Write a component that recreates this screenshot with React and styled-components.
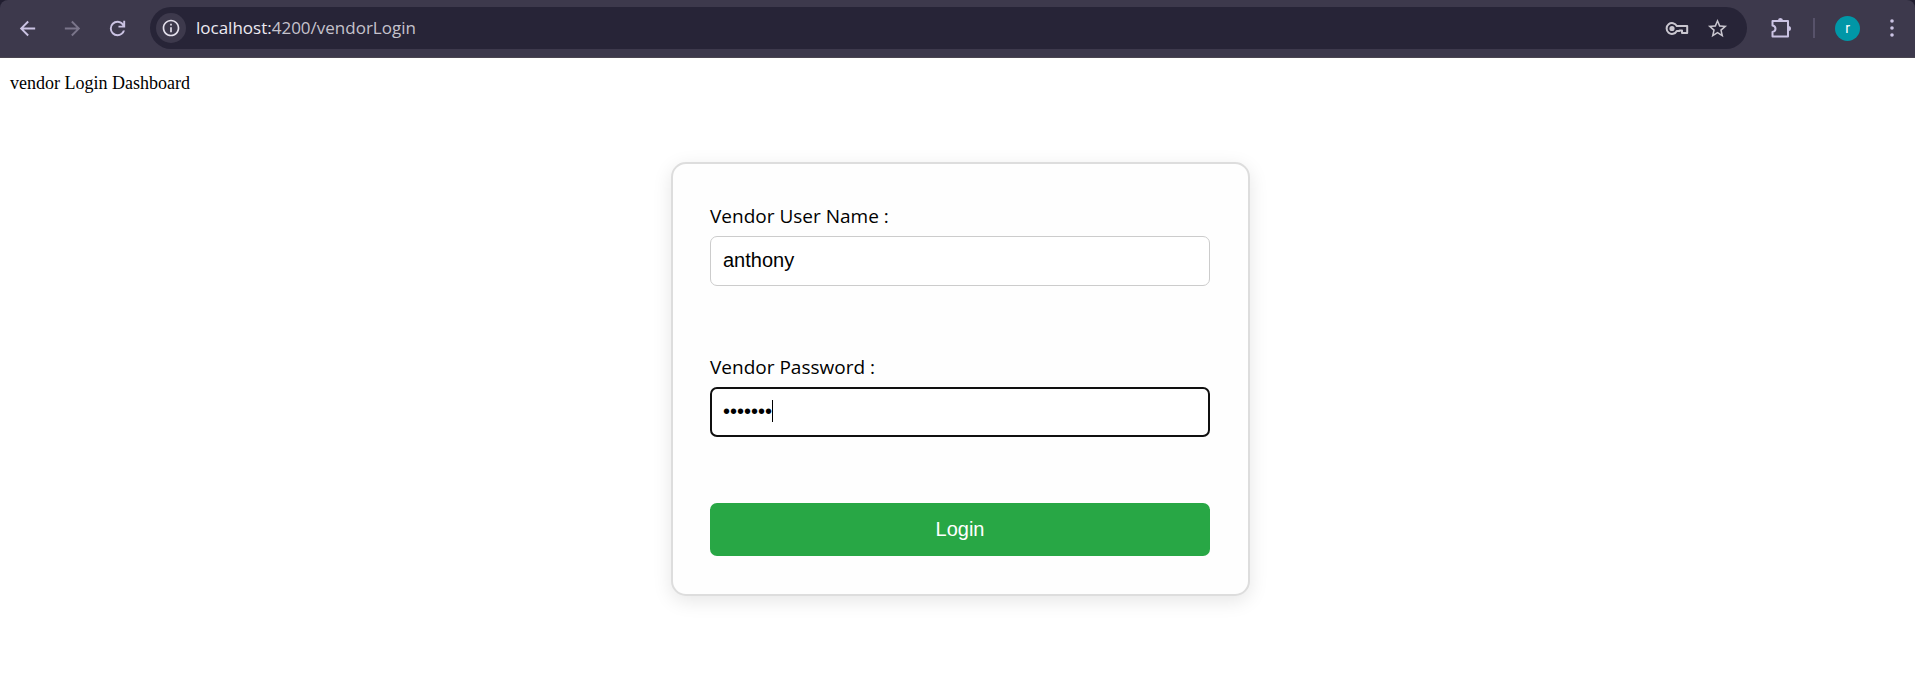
import React, { useState } from "react";
import styled, { createGlobalStyle } from "styled-components";

const GlobalStyle = createGlobalStyle`
  *, *::before, *::after { box-sizing: border-box; }
  html, body { margin: 0; background: #fff; }
`;

const uiFont = `"Segoe UI", "Open Sans", "Noto Sans", sans-serif`;

const BrowserFrame = styled.header`
  background: #211e30;
`;

const Toolbar = styled.div`
  display: flex;
  align-items: center;
  height: 58px;
  padding: 0 9px 1px 13px;
  background: #3d394c;
  border-bottom: 1px solid #4a4550;
  border-radius: 8px 8px 0 0;
`;

const Navigation = styled.nav`
  display: flex;
  gap: 17px;
  margin-right: 19px;
`;

const IconButton = styled.button`
  display: flex;
  align-items: center;
  justify-content: center;
  flex: none;
  width: 28px;
  height: 28px;
  padding: 0;
  border: 0;
  background: transparent;
  color: ${(p) => p.$color || "#cbc3e3"};
  &:disabled { color: #7a758a; }
  svg { display: block; flex: none; }
`;

const AddressBar = styled.div`
  display: flex;
  align-items: center;
  flex: 1;
  height: 42px;
  margin-right: 20px;
  padding: 0 16px 0 6px;
  gap: 12px;
  border-radius: 21px;
  background: #272437;
`;

const SiteInfo = styled(IconButton)`
  width: 30px;
  height: 30px;
  margin-right: -2px;
  border-radius: 50%;
  background: #3d394c;
  color: #e4e0ec;
`;

const Address = styled.div`
  flex: 1;
  font: 17px/24px ${uiFont};
  color: #c5c2cc;
  white-space: nowrap;
  strong { font-weight: 400; color: #edeaf2; }
`;

const Divider = styled.span`
  width: 2px;
  height: 20px;
  margin: 0 20px 0 18px;
  background: #57526a;
`;

const Avatar = styled.button`
  width: 25px;
  height: 25px;
  margin-right: 18px;
  padding: 0;
  border: 0;
  border-radius: 50%;
  background: #0097a7;
  color: #fff;
  font: 14px/24px Roboto, sans-serif;
`;

const Page = styled.main`
  padding: 14px 4px 60px 10px;
`;

const Heading = styled.p`
  margin: 0;
  font: 18px/22px "Liberation Serif", serif;
  color: #000;
`;

const Card = styled.form`
  display: flex;
  flex-direction: column;
  width: 100%;
  max-width: 579px;
  margin: 68px auto 0;
  padding: 38px 38px 38px 37px;
  border: 2px solid #ddd;
  border-radius: 15px;
  background: #fefefe;
  box-shadow: 0 5px 19px rgba(0, 0, 0, 0.1);
`;

const Field = styled.div`
  position: relative;
  margin-bottom: ${(p) => p.$space}px;
`;

const Label = styled.label`
  display: block;
  margin-bottom: 6px;
  font: 19px/28px ${uiFont};
  color: #000;
`;

const TextInput = styled.input`
  display: block;
  width: 100%;
  height: 50px;
  padding: 0 12px 2px;
  border: 1px solid #ccc;
  border-radius: 7px;
  background: #fff;
  color: #000;
  font: 20px "Liberation Sans", Arial, sans-serif;
  outline: none;
  ${(p) => p.$active && `border: 2px solid #101010; padding: 0 11px 2px; caret-color: transparent;`}
`;

const Caret = styled.span`
  position: absolute;
  left: 62px;
  bottom: 15px;
  width: 1px;
  height: 22px;
  background: #000;
`;

const LoginButton = styled.button`
  height: 53px;
  padding: 0 0 1px;
  border: 0;
  border-radius: 7px;
  background: #28a745;
  color: #fff;
  font: 20px "Liberation Sans", Arial, sans-serif;
`;

const Svg = ({ size = 24, children }) => (
  <svg width={size} height={size} viewBox="0 0 24 24" fill="currentColor" aria-hidden="true">{children}</svg>
);

const BackIcon = () => <Svg size={23}><path d="M20 11H7.83l5.59-5.59L12 4l-8 8 8 8 1.41-1.41L7.83 13H20z" /></Svg>;
const ForwardIcon = () => <Svg size={23}><path d="M12 4l-1.41 1.41L16.17 11H4v2h12.17l-5.58 5.59L12 20l8-8z" /></Svg>;
const ReloadIcon = () => <Svg size={23}><path d="M12 20q-3.35 0-5.675-2.325T4 12t2.325-5.675T12 4q1.725 0 3.3.7T18 6.750V4h2v7h-7V9h4.200q-.8-1.400-2.188-2.200T12 6Q9.500 6 7.750 7.750T6 12t1.750 4.250T12 18q1.925 0 3.475-1.100T17.650 14h2.100q-.7 2.650-2.850 4.325T12 20z" /></Svg>;
const InfoIcon = () => <Svg size={20}><path d="M11 17h2v-6h-2v6zm1-15C6.480 2 2 6.480 2 12s4.480 10 10 10 10-4.480 10-10S17.520 2 12 2zm0 18c-4.410 0-8-3.590-8-8s3.590-8 8-8 8 3.590 8 8-3.590 8-8 8zM11 9h2V7h-2v2z" /></Svg>;
const KeyIcon = () => (
  <Svg size={24}>
    <g fill="none" stroke="currentColor" strokeWidth="2">
      <path d="M11.800 10A5.400 5.400 0 1 0 11.800 15H14.500V14.500H17V17H22.200V10Z" strokeLinejoin="round" />
    </g>
    <circle cx="7" cy="12.500" r="2.600" />
  </Svg>
);
const StarIcon = () => <Svg size={23}><path d="M22 9.240l-7.190-.62L12 2 9.190 8.630 2 9.240l5.460 4.730L5.820 21 12 17.270 18.180 21l-1.630-7.030L22 9.240zM12 15.400l-3.760 2.270 1-4.280-3.320-2.880 4.380-.38L12 6.100l1.710 4.040 4.380.38-3.320 2.880 1 4.280L12 15.400z" /></Svg>;
const ExtensionIcon = () => (
  <Svg size={24}>
    <path fill="none" stroke="currentColor" strokeWidth="2" strokeLinejoin="round" d="M3.500 5H19V20.500H3.500V16C7.500 15 7.500 10.500 3.500 9.500Z" />
    <path d="M9 4.500a2.500 2.500 0 0 1 5 0zM19.500 10a2.500 2.500 0 0 1 0 5z" />
  </Svg>
);
const MoreIcon = () => <Svg size={24}><circle cx="12" cy="5" r="1.800" /><circle cx="12" cy="12" r="1.800" /><circle cx="12" cy="19" r="1.800" /></Svg>;

export default function App() {
  const [name, setName] = useState("anthony");
  const [password, setPassword] = useState("secret7");
  return (
    <>
      <GlobalStyle />
      <BrowserFrame>
        <Toolbar>
          <Navigation aria-label="Browser">
            <IconButton aria-label="Back"><BackIcon /></IconButton>
            <IconButton aria-label="Forward" disabled><ForwardIcon /></IconButton>
            <IconButton aria-label="Reload"><ReloadIcon /></IconButton>
          </Navigation>
          <AddressBar>
            <SiteInfo aria-label="Site information"><InfoIcon /></SiteInfo>
            <Address><strong>localhost:</strong>4200/vendorLogin</Address>
            <IconButton aria-label="Passwords" $color="#c9c6cf"><KeyIcon /></IconButton>
            <IconButton aria-label="Bookmark" $color="#c9c6cf"><StarIcon /></IconButton>
          </AddressBar>
          <IconButton aria-label="Extensions"><ExtensionIcon /></IconButton>
          <Divider />
          <Avatar aria-label="Profile r">r</Avatar>
          <IconButton aria-label="Menu"><MoreIcon /></IconButton>
        </Toolbar>
      </BrowserFrame>
      <Page>
        <Heading>vendor Login Dashboard</Heading>
        <Card onSubmit={(e) => e.preventDefault()}>
          <Field $space={67}>
            <Label htmlFor="vendor-name">Vendor User Name :</Label>
            <TextInput id="vendor-name" type="text" value={name} onChange={(e) => setName(e.target.value)} />
          </Field>
          <Field $space={66}>
            <Label htmlFor="vendor-password">Vendor Password :</Label>
            <TextInput id="vendor-password" type="password" $active value={password} onChange={(e) => setPassword(e.target.value)} />
            <Caret />
          </Field>
          <LoginButton type="submit">Login</LoginButton>
        </Card>
      </Page>
    </>
  );
}
